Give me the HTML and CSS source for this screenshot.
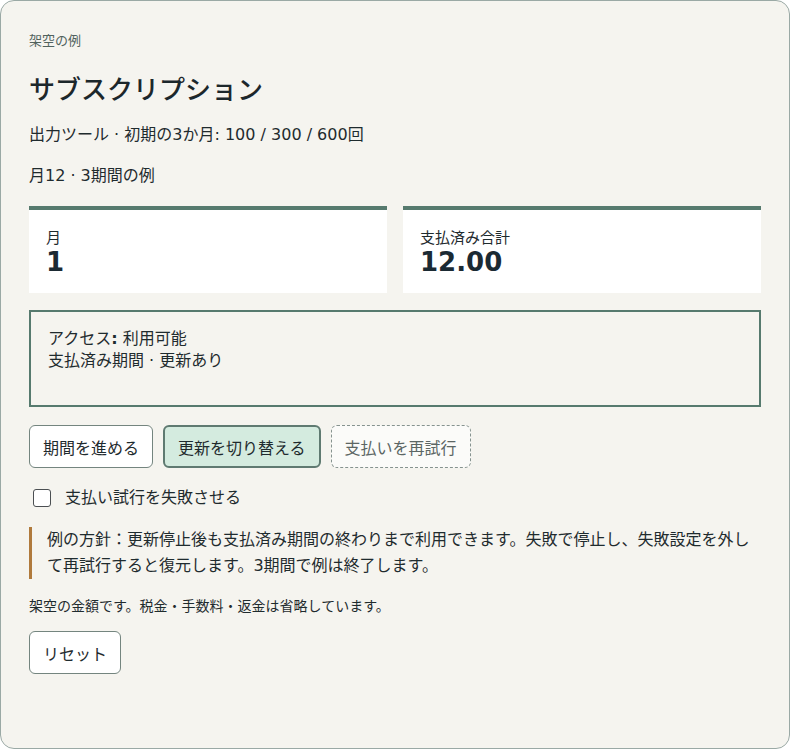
FILE: index.html
```html
<!DOCTYPE html>
<html lang="ja">
<head>
  <meta charset="UTF-8" />
  <meta name="viewport" content="width=device-width, initial-scale=1.0"/>
  <title>サブスクリプション</title>
  <link rel="stylesheet" href="styles.css">
</head>
<body>
  <div class="card">
    <p class="eyebrow">架空の例</p>
    <h1>サブスクリプション</h1>
    <p class="plan">出力ツール · 初期の3か月: 100 / 300 / 600回</p>
    <p class="meta">月12 · 3期間の例</p>

    <div class="stats">
      <div class="stat">
        <span class="stat-label">月</span>
        <span class="stat-value">1</span>
      </div>
      <div class="stat">
        <span class="stat-label">支払済み合計</span>
        <span class="stat-value">12.00</span>
      </div>
    </div>

    <div class="access">
      <p><span class="access-key">アクセス<b>:</b></span> 利用可能</p>
      <p>支払済み期間 · 更新あり</p>
    </div>

    <div class="actions">
      <button class="btn">期間を進める</button>
      <button class="btn toggled">更新を切り替える</button>
      <button class="btn dashed">支払いを再試行</button>
    </div>

    <label class="check">
      <input type="checkbox">
      <span>支払い試行を失敗させる</span>
    </label>

    <p class="policy">例の方針：更新停止後も支払済み期間の終わりまで利用できます。失敗で停止し、失敗設定を外して再試行すると復元します。3期間で例は終了します。</p>

    <p class="footnote">架空の金額です。税金・手数料・返金は省略しています。</p>

    <button class="btn">リセット</button>
  </div>
</body>
</html>
```

FILE: styles.css
```css
* {
  box-sizing: border-box;
}

body {
  margin: 0;
  font-family: "DejaVu Sans", "Noto Sans CJK JP", sans-serif;
  font-size: 16px;
  line-height: 1.4;
  color: #1f2b2e;
  background: #ffffff;
}

p {
  margin: 0;
}

.card {
  min-height: 100vh;
  padding: 32px 28px 28px;
  background: #f5f4ef;
  border: 1px solid #9aa9a5;
  border-radius: 14px;
}

.eyebrow {
  font-size: 13px;
  line-height: 16px;
  color: #51625d;
}

h1 {
  margin: 24px 0 0;
  font-size: 26px;
  line-height: 34px;
  font-weight: 500;
  color: #1c272b;
}

.plan {
  margin-top: 17px;
  line-height: 22px;
}

.meta {
  margin-top: 19px;
  line-height: 22px;
}

.stats {
  display: grid;
  grid-template-columns: 1fr 1fr;
  gap: 16px;
  margin-top: 19px;
}

.stat {
  display: flex;
  flex-direction: column;
  padding: 18px 17px 16px;
  background: #ffffff;
  border-top: 4px solid #567a6e;
}

.stat-label {
  font-size: 15px;
  line-height: 20px;
}

.stat-value {
  font-size: 26px;
  line-height: 29px;
  font-weight: bold;
  color: #1b2a33;
}

.access {
  margin-top: 17px;
  min-height: 97px;
  padding: 16px 17px;
  border: 2px solid #567a6e;
  line-height: 22px;
}

.access-key b {
  font-weight: bold;
}

.actions {
  display: flex;
  gap: 10px;
  margin-top: 18px;
}

.btn {
  height: 43px;
  padding: 0 13px;
  font-family: inherit;
  font-size: 16px;
  color: #1f2b2e;
  background: #ffffff;
  border: 1px solid #74857f;
  border-radius: 6px;
  cursor: pointer;
}

.btn.toggled {
  background: #d4ebdf;
  border: 2px solid #5f7a71;
}

.btn.dashed {
  color: #5c6664;
  background: #fbfbf9;
  border: 1px dashed #86938f;
}

.check {
  display: flex;
  align-items: center;
  gap: 14px;
  margin-top: 19px;
  padding-left: 4px;
  line-height: 22px;
}

.check input {
  width: 18px;
  height: 18px;
  margin: 0;
  appearance: none;
  background: #ffffff;
  border: 1px solid #4b4f52;
  border-radius: 3px;
}

.policy {
  margin-top: 18px;
  padding-left: 15px;
  border-left: 3px solid #b07a3c;
  line-height: 26px;
}

.footnote {
  margin-top: 17px;
  font-size: 14px;
  line-height: 20px;
}

.footnote + .btn {
  margin-top: 15px;
}
```
